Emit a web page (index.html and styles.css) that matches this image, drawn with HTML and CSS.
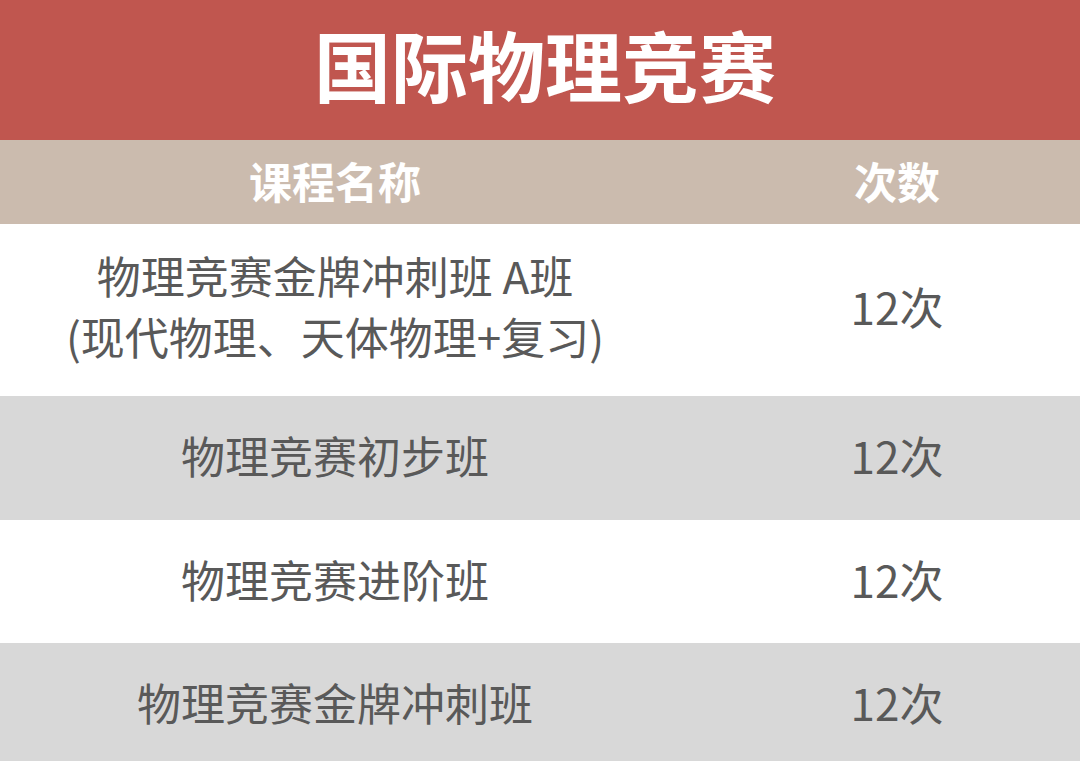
FILE: index.html
```html
<!DOCTYPE html>
<html lang="zh">
<head>
<meta charset="utf-8">
<title>国际物理竞赛</title>
<link rel="stylesheet" href="styles.css">
</head>
<body>
<div class="page">
  <div class="title">国际物理竞赛</div>
  <div class="row head">
    <div class="c1">课程名称</div>
    <div class="c2">次数</div>
  </div>
  <div class="row r1 white">
    <div class="c1">物理竞赛金牌冲刺班 A班<br>(现代物理、天体物理+复习)</div>
    <div class="c2">12次</div>
  </div>
  <div class="row r2 gray">
    <div class="c1">物理竞赛初步班</div>
    <div class="c2">12次</div>
  </div>
  <div class="row r3 white">
    <div class="c1">物理竞赛进阶班</div>
    <div class="c2">12次</div>
  </div>
  <div class="row r4 gray">
    <div class="c1">物理竞赛金牌冲刺班</div>
    <div class="c2">12次</div>
  </div>
</div>
</body>
</html>
```

FILE: styles.css
```css
html, body {
  margin: 0;
  padding: 0;
  background: #ffffff;
}
body {
  width: 1080px;
  height: 761px;
  overflow: hidden;
  font-family: "Noto Sans CJK SC", "Noto Sans", sans-serif;
}
.page {
  display: flex;
  flex-direction: column;
}
.title {
  height: 140px;
  background: #c0564f;
  color: #ffffff;
  font-size: 77px;
  font-weight: 700;
  display: flex;
  align-items: center;
  justify-content: center;
  padding-left: 10px;
  box-sizing: border-box;
  padding-bottom: 14px;
}
.row {
  display: grid;
  grid-template-columns: 670px 1fr;
  align-items: center;
  box-sizing: border-box;
  padding-bottom: 6px;
}
.row .c1 {
  text-align: center;
}
.row .c2 {
  text-align: center;
  padding-left: 44px;
}
.head {
  height: 84px;
  background: #cbbbae;
  color: #ffffff;
  font-size: 43px;
  font-weight: 700;
  padding-bottom: 4px;
}
.white { background: #ffffff; }
.gray { background: #d8d8d8; }
.r1, .r2, .r3, .r4 {
  color: #595959;
  font-size: 44px;
  font-weight: 400;
}
.r1 { height: 172px; line-height: 61px; padding-bottom: 8px; }
.r2 { height: 124px; }
.r3 { height: 123px; }
.r4 { height: 123px; }
```
